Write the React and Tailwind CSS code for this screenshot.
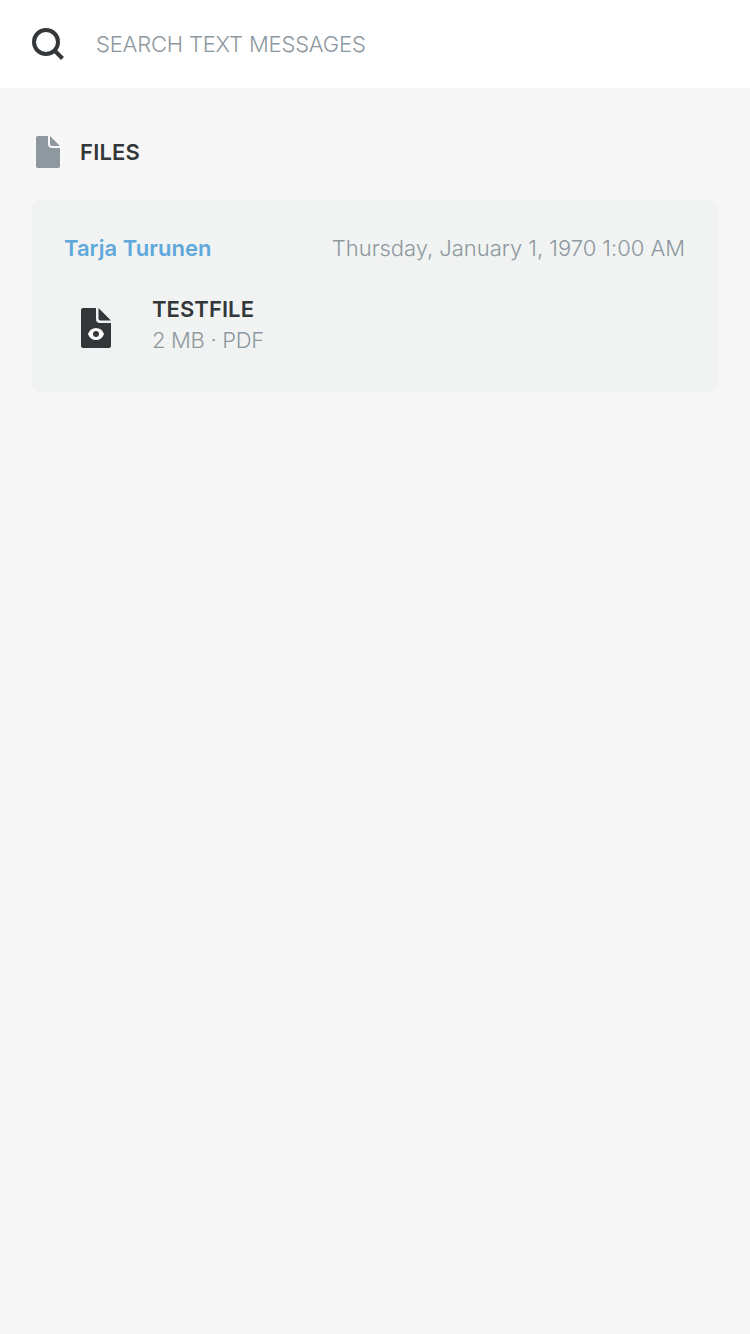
export default function App() {
  return (
    <div className="min-h-[1334px] w-[750px] bg-[#f7f7f7] font-['Inter',sans-serif] text-[22px] leading-[26px] text-[#33373a] antialiased">
      <header className="flex h-[88px] items-center bg-white pl-8">
        <svg width="32" height="32" viewBox="0 0 32 32" fill="none" stroke="#33373a" strokeWidth="4">
          <circle cx="14" cy="14" r="12" />
          <path d="M22.5 22.5 30.5 30.5" />
        </svg>
        <span className="ml-8 font-light tracking-[-0.19px] text-[#8d989f]">SEARCH TEXT MESSAGES</span>
      </header>
      <main className="px-8">
        <div className="flex h-28 items-center pt-4">
          <svg className="ml-1" width="24" height="32" viewBox="0 0 24 32" fill="#8d989f">
            <path d="M2 0H12V8a4 4 0 0 0 4 4H24V30a2 2 0 0 1-2 2H2a2 2 0 0 1-2-2V2a2 2 0 0 1 2-2ZM14 0 24 10H16a2 2 0 0 1-2-2Z" />
          </svg>
          <h2 className="ml-5 font-semibold tracking-[0.2px]">FILES</h2>
        </div>
        <section className="h-48 rounded-lg bg-[#f0f3f2] px-8 pt-[35px]">
          <div className="flex justify-between">
            <span className="font-semibold tracking-[0.04px] text-[#5fa8dc]">Tarja Turunen</span>
            <span className="mr-px font-light tracking-[-0.03px] text-[#8d989f]">Thursday, January 1, 1970 1:00 AM</span>
          </div>
          <div className="mt-[35px] flex">
            <svg className="ml-[17px] mt-[12px]" width="30" height="40" viewBox="0 0 30 40" fill="#33373a">
              <path d="M2 0H15V11a4 4 0 0 0 4 4H30V38a2 2 0 0 1-2 2H2a2 2 0 0 1-2-2V2a2 2 0 0 1 2-2ZM17.5 0 30 12.5H19.5a2 2 0 0 1-2-2Z" />
              <path fill="#fff" d="M7 26C8.4 22 11.4 20 15 20S21.6 22 23 26C21.6 30 18.6 32 15 32S8.4 30 7 26Z" />
              <circle cx="15" cy="26" r="3" />
            </svg>
            <div className="ml-[41px]">
              <div className="font-semibold tracking-[0.07px]">TESTFILE</div>
              <div className="mt-[5px] font-light tracking-[-0.3px] text-[#8d989f]">2 MB · PDF</div>
            </div>
          </div>
        </section>
      </main>
    </div>
  );
}
